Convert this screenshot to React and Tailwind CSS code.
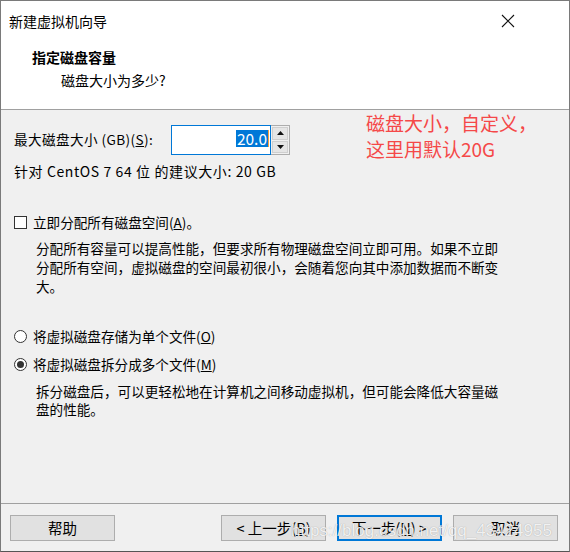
import React from 'react';

const font = { fontFamily: '"Noto Sans CJK SC", "Noto Sans", sans-serif' };

function Btn({ children, primary }) {
  return (
    <button
      className={`h-[26px] w-[105px] text-[14.5px] leading-none text-black bg-[#e1e1e1] flex items-center justify-center ${
        primary ? 'border-2 border-[#0078d7]' : 'border border-[#adadad]'
      }`}
    >
      {children}
    </button>
  );
}

function Radio({ checked }) {
  return (
    <span className="w-[13px] h-[13px] rounded-full border border-[#333] bg-white flex items-center justify-center shrink-0">
      {checked && <span className="w-[7px] h-[7px] rounded-full bg-[#333]" />}
    </span>
  );
}

export default function App() {
  return (
    <div
      style={font}
      className="relative w-[570px] h-[552px] flex flex-col bg-[#f0f0f0] border border-[#7a7a7a] border-b-[#555] text-[14px] text-black overflow-hidden"
    >
      {/* title + header */}
      <div className="h-[109px] bg-white border-b border-[#a0a0a0] flex flex-col">
        <div className="h-[39px] flex items-center justify-between pl-[8px] pr-[54px]">
          <span className="leading-none">新建虚拟机向导</span>
          <svg width="14" height="14" viewBox="0 0 14 14">
            <path d="M1 1 L13 13 M13 1 L1 13" stroke="#111" strokeWidth="1.1" />
          </svg>
        </div>
        <div className="pl-[31px] mt-[8px] leading-[19px] font-bold">指定磁盘容量</div>
        <div className="pl-[60px] mt-[4px] leading-[19px]">磁盘大小为多少?</div>
      </div>

      {/* body */}
      <div className="relative flex-1 flex flex-col pl-[13px] pt-[15px] text-[13.6px]">
        <div className="flex items-center h-[30px]">
          <span className="w-[157px] leading-none tracking-[0.4px]">
            最大磁盘大小 (GB)(<span className="underline">S</span>):
          </span>
          <div className="w-[100px] h-[30px] bg-white border border-[#0078d7] flex items-center justify-end pr-[1px] pb-[4px]">
            <span className="bg-[#0078d7] text-white text-[15.5px] leading-[17px] px-[1px] border-r border-[#f7a03c]">20.0</span>
          </div>
          <div className="w-[19px] h-[30px] flex flex-col border border-[#adadad] border-l-0 bg-[#f0f0f0] p-[1px] gap-[1px]">
            <div className="flex-1 bg-[#e5e5e5] border border-[#cfcfcf] flex items-center justify-center">
              <svg width="7" height="4" viewBox="0 0 7 4"><path d="M3.5 0 L7 4 L0 4 Z" fill="#111" /></svg>
            </div>
            <div className="flex-1 bg-[#e5e5e5] border border-[#cfcfcf] flex items-center justify-center">
              <svg width="7" height="4" viewBox="0 0 7 4"><path d="M0 0 L7 0 L3.5 4 Z" fill="#111" /></svg>
            </div>
          </div>
        </div>

        <div className="mt-[7px] leading-[19px] tracking-[0.6px] text-[14px]">针对 CentOS 7 64 位 的建议大小: 20 GB</div>

        <div className="mt-[32px] flex items-center h-[19px]">
          <span className="w-[13px] h-[13px] border border-[#333] bg-white shrink-0" />
          <span className="ml-[6px] leading-none">
            立即分配所有磁盘空间(<span className="underline">A</span>)。
          </span>
        </div>
        <p className="mt-[7px] pl-[22px] leading-[19px]">
          分配所有容量可以提高性能，但要求所有物理磁盘空间立即可用。如果不立即
          <br />
          分配所有空间，虚拟磁盘的空间最初很小，会随着您向其中添加数据而不断变
          <br />
          大。
        </p>

        <div className="mt-[31px] flex items-center h-[19px]">
          <Radio />
          <span className="ml-[6px] leading-none">
            将虚拟磁盘存储为单个文件(<span className="underline">O</span>)
          </span>
        </div>
        <div className="mt-[9px] flex items-center h-[19px]">
          <Radio checked />
          <span className="ml-[6px] leading-none">
            将虚拟磁盘拆分成多个文件(<span className="underline">M</span>)
          </span>
        </div>
        <p className="mt-[8px] pl-[22px] leading-[18px]">
          拆分磁盘后，可以更轻松地在计算机之间移动虚拟机，但可能会降低大容量磁
          <br />
          盘的性能。
        </p>

        <div className="absolute left-[365px] top-[0px] text-[19px] leading-[26px] text-[#f54848]">
          磁盘大小，自定义，
          <br />
          这里用默认20G
        </div>
      </div>

      {/* footer */}
      <div className="h-[48px] border-t border-[#a0a0a0] flex items-start pt-[11px] pl-[9px] pr-[11px]">
        <Btn>帮助</Btn>
        <div className="flex-1" />
        <Btn>
          &lt; 上一步(<span className="underline">B</span>)
        </Btn>
        <div className="w-[11px]" />
        <Btn primary>
          下一步(<span className="underline">N</span>) &gt;
        </Btn>
        <div className="w-[11px]" />
        <Btn>取消</Btn>
      </div>

      <div
        className="absolute left-[290px] top-[519px] text-[17px] leading-[22px] text-white/85 pointer-events-none"
        style={{ fontFamily: '"Liberation Sans", Arial, sans-serif', textShadow: '0 0 1px rgba(0,0,0,0.35)' }}
      >
        https://blog.csdn.net/qq_43424955
      </div>
    </div>
  );
}
